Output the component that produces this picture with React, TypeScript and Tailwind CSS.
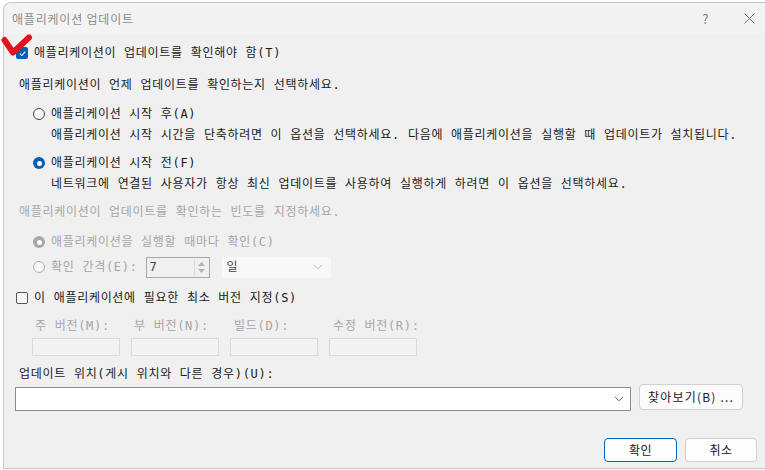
import React from 'react';

const mono = 'font-["DejaVu_Sans_Mono","Noto_Sans_CJK_KR",monospace] tracking-[0.7px]';
const ui = 'font-["Noto_Sans_CJK_KR","Noto_Sans",sans-serif]';

const Radio = ({ checked = false, disabled = false }: { checked?: boolean; disabled?: boolean }) => {
  if (checked) {
    return (
      <span
        className={`w-[12px] h-[12px] rounded-full flex items-center justify-center shrink-0 ${
          disabled ? 'bg-[#a8a8a8]' : 'bg-[#005fb8]'
        }`}
      >
        <span className="w-[5px] h-[5px] rounded-full bg-white" />
      </span>
    );
  }
  return (
    <span
      className={`w-[12px] h-[12px] rounded-full border shrink-0 bg-[#f7f7f7] ${
        disabled ? 'border-[#b0b0b0]' : 'border-[#444]'
      }`}
    />
  );
};

const Checkbox = ({ checked = false }: { checked?: boolean }) =>
  checked ? (
    <span className="w-[12px] h-[12px] rounded-[2px] bg-[#005fb8] flex items-center justify-center shrink-0">
      <svg width="9" height="9" viewBox="0 0 10 10">
        <path d="M2 5.2 L4.2 7.3 L8.2 2.8" fill="none" stroke="white" strokeWidth="1.2" />
      </svg>
    </span>
  ) : (
    <span className="w-[12px] h-[12px] rounded-[2px] border border-[#555] bg-[#f8f8f8] shrink-0" />
  );

const Chevron = ({ color = '#606060' }: { color?: string }) => (
  <svg width="10" height="6" viewBox="0 0 10 6">
    <path d="M1 0.8 L5 4.8 L9 0.8" fill="none" stroke={color} strokeWidth="1" />
  </svg>
);

export default function App() {
  return (
    <div className={`relative w-[765px] h-[470px] bg-white overflow-hidden ${mono} text-[12px] text-[#1a1a1a]`}>
      {/* window */}
      <div className="ml-[3px] mt-[2px] w-[762px] h-[467px] border-l border-t border-b border-[#c6c6c6] rounded-tl-[8px] bg-[#f0f0f0] flex flex-col overflow-hidden">
        {/* title bar */}
        <div className={`h-[31px] bg-[#f3f3f3] flex items-center pl-[8px] ${ui} text-[12px] text-[#8c8c8c]`}>
          <span className="tracking-[0.8px]">애플리케이션 업데이트</span>
          <span className="ml-auto text-[13px] text-[#7a7a7a] mr-[35px]">?</span>
          <span className="mr-[10px]">
            <svg width="11" height="11" viewBox="0 0 11 11">
              <path d="M0.5 0.5 L10.5 10.5 M10.5 0.5 L0.5 10.5" stroke="#666" strokeWidth="0.9" />
            </svg>
          </span>
        </div>

        {/* body */}
        <div className="flex flex-col leading-[20px]">
          <div className="h-[20px] mt-[9px] ml-[12px] flex items-center gap-[6px]">
            <Checkbox checked />
            <span>애플리케이션이 업데이트를 확인해야 함(T)</span>
          </div>

          <div className="h-[20px] mt-[12px] ml-[15px] flex items-center">
            애플리케이션이 언제 업데이트를 확인하는지 선택하세요.
          </div>

          <div className="h-[20px] mt-[9px] ml-[29px] flex items-center gap-[6px]">
            <Radio />
            <span>애플리케이션 시작 후(A)</span>
          </div>
          <div className="h-[20px] mt-[1px] ml-[47px] flex items-center whitespace-nowrap">
            애플리케이션 시작 시간을 단축하려면 이 옵션을 선택하세요. 다음에 애플리케이션을 실행할 때 업데이트가 설치됩니다.
          </div>

          <div className="h-[20px] mt-[8px] ml-[29px] flex items-center gap-[6px]">
            <Radio checked />
            <span>애플리케이션 시작 전(F)</span>
          </div>
          <div className="h-[20px] mt-[1px] ml-[47px] flex items-center whitespace-nowrap">
            네트워크에 연결된 사용자가 항상 최신 업데이트를 사용하여 실행하게 하려면 이 옵션을 선택하세요.
          </div>

          <div className="h-[20px] mt-[8px] ml-[15px] flex items-center text-[#a6a6a6]">
            애플리케이션이 업데이트를 확인하는 빈도를 지정하세요.
          </div>

          <div className="h-[20px] mt-[10px] ml-[29px] flex items-center gap-[6px] text-[#a6a6a6]">
            <Radio checked disabled />
            <span>애플리케이션을 실행할 때마다 확인(C)</span>
          </div>

          <div className="h-[22px] mt-[4px] ml-[29px] flex items-center text-[#a6a6a6]">
            <Radio disabled />
            <span className="ml-[6px]">확인 간격(E):</span>
            <div className="ml-[8px] w-[64px] h-[21px] border border-[#a8a8a8] flex items-stretch">
              <span className="flex-1 pl-[3px] text-[#444] flex items-center">7</span>
              <div className="w-[14px] flex flex-col items-center justify-center gap-[3px] my-[1px] mr-[1px] border-l border-[#dcdcdc]">
                <svg width="7" height="4" viewBox="0 0 7 4">
                  <path d="M0 4 L3.5 0 L7 4 Z" fill="#b4b4b4" />
                </svg>
                <svg width="7" height="4" viewBox="0 0 7 4">
                  <path d="M0 0 L3.5 4 L7 0 Z" fill="#b4b4b4" />
                </svg>
              </div>
            </div>
            <div className="ml-[12px] w-[109px] h-[21px] bg-[#f8f8f8] flex items-center pl-[5px] pr-[8px] text-[#444]">
              <span className="flex-1">일</span>
              <Chevron color="#b8b8b8" />
            </div>
          </div>

          <div className="h-[20px] mt-[10px] ml-[12px] flex items-center gap-[6px]">
            <Checkbox />
            <span>이 애플리케이션에 필요한 최소 버전 지정(S)</span>
          </div>

          <div className="h-[20px] mt-[8px] ml-[31px] flex items-center text-[#a6a6a6]">
            <span className="w-[99px]">주 버전(M):</span>
            <span className="w-[100px]">부 버전(N):</span>
            <span className="w-[99px]">빌드(D):</span>
            <span>수정 버전(R):</span>
          </div>
          <div className="h-[18px] mt-[2px] ml-[28px] flex items-center gap-[11px]">
            <div className="w-[88px] h-[18px] border border-[#dadada] bg-[#f3f3f3]" />
            <div className="w-[88px] h-[18px] border border-[#dadada] bg-[#f3f3f3]" />
            <div className="w-[88px] h-[18px] border border-[#dadada] bg-[#f3f3f3]" />
            <div className="w-[88px] h-[18px] border border-[#dadada] bg-[#f3f3f3]" />
          </div>

          <div className="h-[20px] mt-[8px] ml-[15px] flex items-center">
            업데이트 위치(게시 위치와 다른 경우)(U):
          </div>

          <div className="h-[27px] ml-[11px] flex items-start">
            <div className="mt-[3px] w-[616px] h-[24px] bg-white border border-[#8c8c8c] flex items-center justify-end pr-[6px]">
              <Chevron />
            </div>
            <button
              className={`ml-[8px] w-[104px] h-[26px] rounded-[4px] border border-[#d0d0d0] bg-[#fbfbfb] ${ui} tracking-[1.2px] text-[12px] text-[#1a1a1a] flex items-center justify-center`}
            >
              찾아보기(B) ...
            </button>
          </div>

          <div className="mt-[27px] flex justify-end pr-[8px] gap-[8px]">
            <button
              className={`w-[73px] h-[24px] rounded-[4px] border border-[#0067c0] bg-[#fdfdfd] ${ui} tracking-[0.5px] text-[12px] text-[#1a1a1a] flex items-center justify-center`}
            >
              확인
            </button>
            <button
              className={`w-[72px] h-[24px] rounded-[4px] border border-[#d0d0d0] bg-[#fdfdfd] ${ui} tracking-[0.5px] text-[12px] text-[#1a1a1a] flex items-center justify-center`}
            >
              취소
            </button>
          </div>
        </div>
      </div>

      {/* red check annotation over the checkbox */}
      <svg className="absolute left-0 top-[33px]" width="34" height="28" viewBox="0 0 34 28">
        <path
          d="M4.5 7 L13 19.5 L29 4.5"
          fill="none"
          stroke="#e3131b"
          strokeWidth="6"
          strokeLinecap="round"
          strokeLinejoin="round"
        />
      </svg>
    </div>
  );
}
